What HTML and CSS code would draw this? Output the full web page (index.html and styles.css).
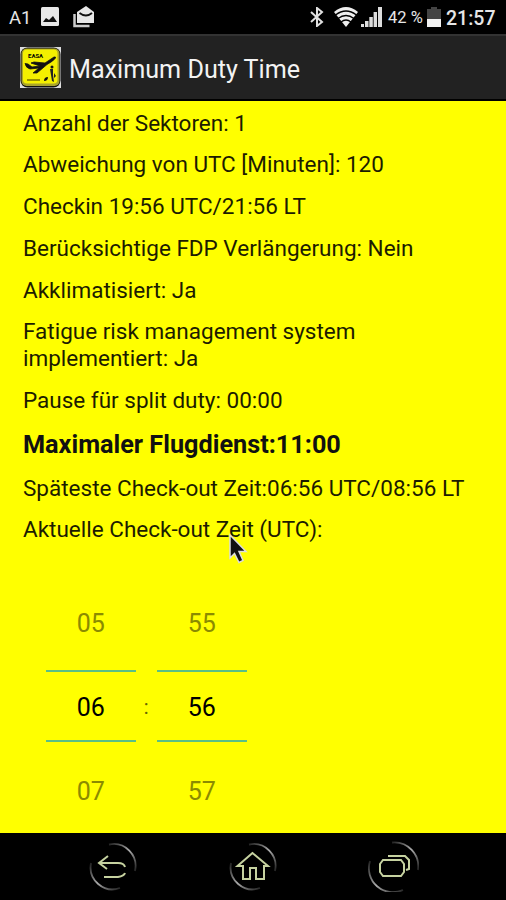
FILE: index.html
```html
<!DOCTYPE html>
<html lang="de">
<head>
  <meta charset="UTF-8">
  <title>Maximum Duty Time</title>
  <link rel="stylesheet" href="styles.css">
</head>
<body>

  <div class="status-bar">
    <span class="carrier">A1</span>
    <svg class="icon-picture" width="18" height="20" viewBox="0 0 18 20">
      <rect width="18" height="19" rx="1.5" fill="#e8e8e8"/>
      <path d="M2 15l3-4 3 2 4-4 4 6z" fill="#111"/>
    </svg>
    <svg class="icon-mail" width="22" height="22" viewBox="0 0 22 22">
      <path d="M1.500 8v12h15" fill="none" stroke="#ccc" stroke-width="2.500"/>
      <path d="M4 6l9-6 8 6v11H4z" fill="#e8e8e8"/>
      <path d="M6.500 7q6.500 5 12.500 0" fill="none" stroke="#111" stroke-width="2"/>
    </svg>
    <svg class="icon-bluetooth" width="14" height="20" viewBox="0 0 14 20">
      <path d="M1 5l11 10-5 4V1l5 4L1 15" fill="none" stroke="#e0e0e0" stroke-width="2"/>
    </svg>
    <svg class="icon-wifi" width="24" height="20" viewBox="0 0 24 20">
      <path d="M0 5Q12-5 24 5L12 20z" fill="#eee"/>
      <path d="M1.500 8Q12 0 22.500 8M4 11.500q8-6 16 0M7 15q5-4 10 0" fill="none" stroke="#000" stroke-width="1.300"/>
    </svg>
    <svg class="icon-signal" width="21" height="20" viewBox="0 0 21 20">
      <path d="M0 17h3v3H0zM4 14h3.500v6H4zM8.300 10h3.500v10H8.300zM12.600 5H16v15h-3.400zM17 0h4v20h-4z" fill="#ddd"/>
    </svg>
    <span class="battery-text">42 %</span>
    <svg class="icon-battery" width="14" height="20" viewBox="0 0 14 20">
      <path d="M0 2h4V0h6v2h4v11H0z" fill="#444"/>
      <path d="M0 12h14v8H0z" fill="#f2f2f2"/>
    </svg>
    <span class="clock">21:57</span>
  </div>

  <header>
    <svg class="logo" width="41" height="41" viewBox="0 0 41 41">
      <rect width="41" height="41" fill="#ddd"/>
      <rect x=".5" y=".5" width="40" height="40" rx="7" fill="#111"/>
      <rect x="1.500" y="1.500" width="38" height="37.500" rx="5" fill="#aaa52a"/>
      <rect x="3" y="2.500" width="34.500" height="34" rx="4" fill="#f4f000"/>
      <text class="logo-text" x="8" y="11">EASA</text>
      <path d="M5 16.500l3 .5 4 3 8-1-9-3 3-1 11 1 9-6q2-.5 1.500 1-2 3-8.500 6.500L17 26h-4l6-5-9 1q-4-1-5-5.500z" fill="#111" stroke="#111" stroke-width=".8"/>
      <path d="M7 33h13" stroke="#776f00" stroke-width="1.500"/>
      <path d="M24 34q0-4 4-4 0 4-4 4z" fill="#111"/>
      <circle cx="32" cy="20" r="1.500" fill="#111"/>
      <path d="M30 22h3v6l1 7-2-1-1-6zM34 26l2 3-2 2z" fill="#222"/>
    </svg>
    <h1>Maximum Duty Time</h1>
  </header>

  <main>
    <p>Anzahl der Sektoren: 1</p>
    <p>Abweichung von UTC [Minuten]: 120</p>
    <p>Checkin 19:56 UTC/21:56 LT</p>
    <p>Berücksichtige FDP Verlängerung: Nein</p>
    <p>Akklimatisiert: Ja</p>
    <p>Fatigue risk management system<br>implementiert: Ja</p>
    <p>Pause für split duty: 00:00</p>
    <p class="result">Maximaler Flugdienst:11:00</p>
    <p>Späteste Check-out Zeit:06:56 UTC/08:56 LT</p>
    <p>Aktuelle Check-out Zeit (UTC):</p>

    <div class="time-picker">
      <div class="wheel">
        <span class="value">05</span>
        <span class="value selected">06</span>
        <span class="value">07</span>
      </div>
      <span class="colon">:</span>
      <div class="wheel">
        <span class="value">55</span>
        <span class="value selected">56</span>
        <span class="value">57</span>
      </div>
    </div>
  </main>

  <nav>
    <svg width="48" height="48" viewBox="0 0 48 48">
      <defs>
        <linearGradient id="ring-fade" x1="0" y1="0" x2="1" y2="1">
          <stop offset="0" stop-color="#222"/>
          <stop offset=".5" stop-color="#aaa"/>
          <stop offset="1" stop-color="#222"/>
        </linearGradient>
      </defs>
      <path class="ring" d="M20 1.500A22 22 0 0 1 46 28"/>
      <path class="ring" d="M2 20A22 22 0 0 0 31 45"/>
      <path class="glyph" d="M19 13l-9 7 8 6M11 20h18q6 0 7 4M15 34h14q6-1 7-4"/>
    </svg>
    <svg width="48" height="48" viewBox="0 0 48 48">
      <path class="ring" d="M20 1.500A22 22 0 0 1 46 28"/>
      <path class="ring" d="M2 20A22 22 0 0 0 31 45"/>
      <path class="glyph" d="M23.500 10L8.500 23h5.500v13h7V25h6v11h8V23h4z"/>
    </svg>
    <svg width="51" height="51" viewBox="0 0 51 51">
      <path class="ring" d="M24 1.500A24 24 0 0 1 50 29"/>
      <path class="ring" d="M2 20A24 24 0 0 0 35 49"/>
      <path class="glyph" d="M15 19h18l3 4v8l-3 4H15l-3-4v-8zM20 15h17l4 4v9l-3 1"/>
    </svg>
  </nav>

  <svg class="cursor" width="20" height="32" viewBox="0 0 20 32">
    <path d="M2 2v23l4.500-4.500 4.500 9 4-2-4-9h7z" fill="#111" stroke="#ddd" stroke-width="1.500"/>
  </svg>

</body>
</html>
```

FILE: styles.css
```css
body {
  margin: 0;
  height: 900px;
  display: flex;
  flex-direction: column;
  overflow: hidden;
  background: #000;
  font-family: Roboto, sans-serif;
}

.status-bar {
  height: 34px;
  display: flex;
  align-items: center;
  padding: 0 10px 0 9px;
  color: #e6e6e6;
  white-space: nowrap;
}

.carrier {
  width: 32px;
  padding-top: 1px;
  font-size: 18.5px;
}

.icon-mail {
  margin-left: 14px;
}

.icon-bluetooth {
  margin-left: auto;
}

.icon-wifi {
  margin-left: 10px;
}

.icon-signal {
  margin-left: 3px;
}

.battery-text {
  width: 39px;
  margin-left: 6px;
  padding-top: 1px;
  font-size: 16.5px;
}

.clock {
  width: 50px;
  margin-left: 5px;
  padding-top: 2px;
  font-size: 19.5px;
  font-weight: 500;
}

header {
  height: 65px;
  display: flex;
  align-items: center;
  padding-left: 20px;
  background: #222;
  border-top: 2px solid #333;
  box-sizing: border-box;
}

.logo {
  margin-right: 8px;
}

.logo-text {
  font-size: 6px;
  font-weight: bold;
}

h1 {
  margin: 0;
  padding-top: 4px;
  color: #f3f3f3;
  font-size: 25.15px;
  font-weight: normal;
}

main {
  height: 732px;
  margin-top: 2px;
  padding: 8.6px 0 0 23px;
  box-sizing: border-box;
  background: #ff0;
  color: #1c1c00;
}

p {
  margin: 0 0 15px;
  font-size: 22.5px;
  line-height: 26.75px;
}

.result {
  color: #111;
  font-size: 25.25px;
  font-weight: bold;
  line-height: 31px;
}

.time-picker {
  display: flex;
  align-items: center;
  margin: 38px 0 0 23px;
}

.wheel {
  width: 89.5px;
}

.value {
  display: block;
  height: 84px;
  line-height: 86px;
  text-align: center;
  font-size: 25px;
  color: #8b8b00;
}

.selected {
  height: 68px;
  margin: 5px 0 7px;
  line-height: 71px;
  border-top: 2px solid #5abf85;
  border-bottom: 2px solid #5abf85;
  color: #000;
}

.colon {
  width: 21.5px;
  text-align: center;
  font-size: 20px;
  color: #666600;
}

nav {
  height: 67px;
  display: flex;
  align-items: center;
  justify-content: space-between;
  padding: 0 87px 0 89px;
}

/* each arc fades out at both ends */
.ring {
  fill: none;
  stroke: url(#ring-fade);
  stroke-width: 1.8;
}

.glyph {
  fill: none;
  stroke: #c6d2a0;
  stroke-width: 2;
}

/* mouse pointer lies over the text */
.cursor {
  position: absolute;
  left: 228px;
  top: 533px;
}
```
